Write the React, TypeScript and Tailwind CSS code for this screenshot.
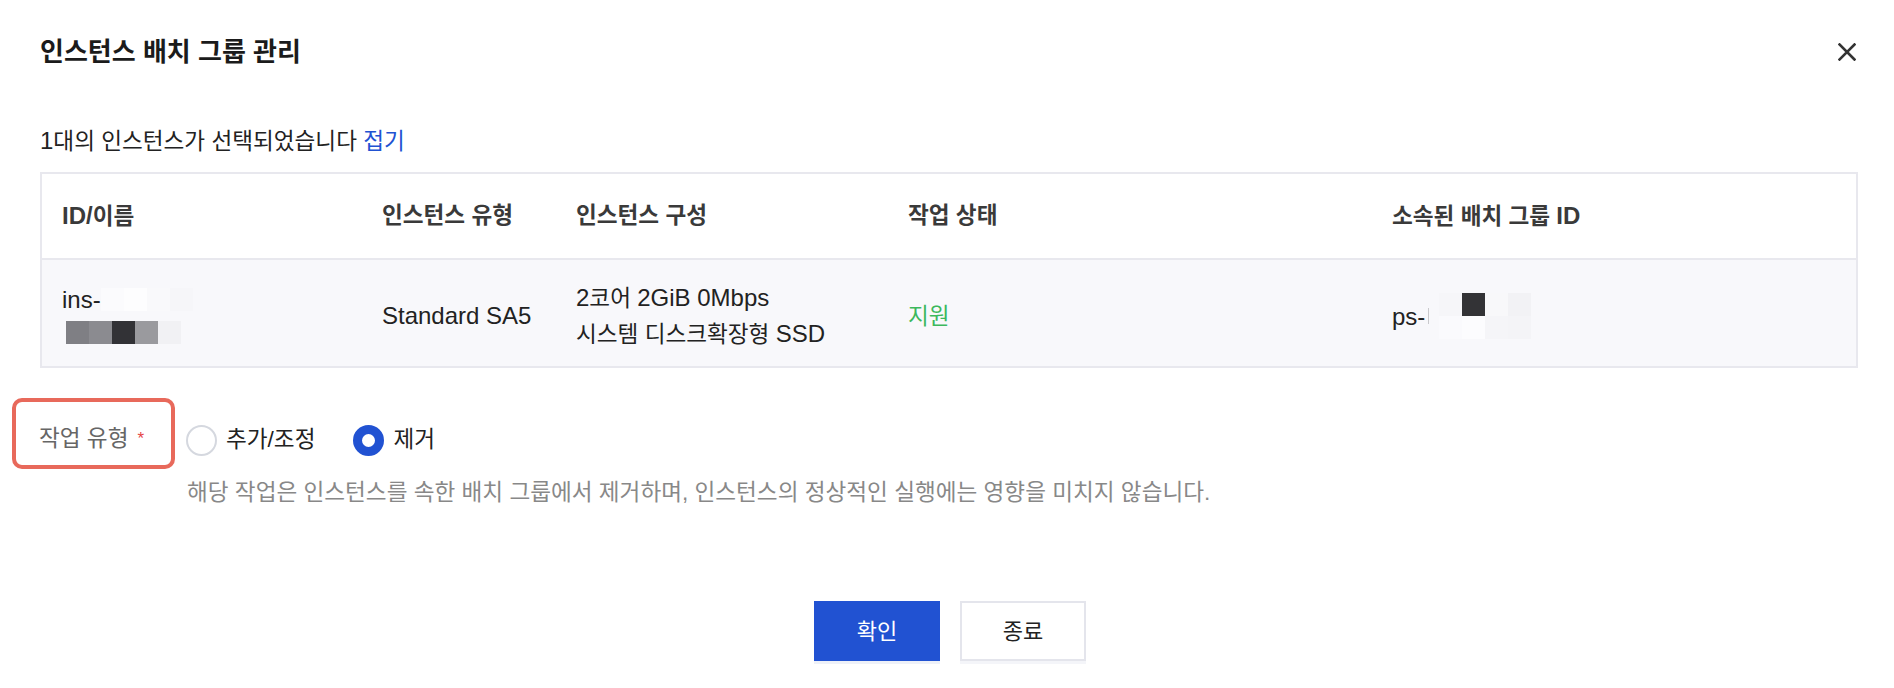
import React from "react";

const FONT = "font-['Liberation_Sans','Noto_Sans_CJK_KR',sans-serif]";

function L({ children }: { children: React.ReactNode }) {
  return <span className="text-[24px]">{children}</span>;
}

function Blocks({ rows, w = 23, h = 23 }: { rows: string[][]; w?: number; h?: number }) {
  return (
    <span className="inline-flex flex-col align-middle">
      {rows.map((r, i) => (
        <span key={i} className="flex">
          {r.map((c, j) => (
            <span key={j} className="block" style={{ background: c, width: w, height: h }} />
          ))}
        </span>
      ))}
    </span>
  );
}

export default function App() {
  return (
    <div className={`${FONT} w-[1894px] h-[688px] bg-white text-[#222] pl-10 pr-9 pt-[36px] relative`}>
      {/* Header */}
      <div className="flex items-center justify-between h-8">
        <h1 className="text-[26px] leading-8 font-bold text-[#1b1b1b]">인스턴스 배치 그룹 관리</h1>
        <button className="w-[20px] h-[20px] flex items-center justify-center mr-[1px]">
          <svg width="18" height="18" viewBox="0 0 18 18">
            <path d="M1.5 1.5 L16.5 16.5 M16.5 1.5 L1.5 16.5" stroke="#333" strokeWidth="2.6" strokeLinecap="square" />
          </svg>
        </button>
      </div>

      {/* Selection line */}
      <div className="mt-[58px] text-[22.6px] leading-[30px] text-[#222]">
        <L>1</L>대의 인스턴스가 선택되었습니다 <span className="text-[#2152d2]">접기</span>
      </div>

      {/* Table */}
      <div className="mt-[15px] border-2 border-[#e8e8ee]">
        <div className="grid grid-cols-[320px_194px_332px_484px_1fr] h-[86px] items-center border-b-2 border-[#e8e8ee] bg-white text-[22.6px] leading-[30px] font-bold text-[#3a3a3a]">
          <div className="pl-5"><L>ID/</L>이름</div>
          <div className="pl-5">인스턴스 유형</div>
          <div className="pl-5">인스턴스 구성</div>
          <div className="pl-5">작업 상태</div>
          <div className="pl-5">소속된 배치 그룹 <L>ID</L></div>
        </div>
        <div className="grid grid-cols-[320px_194px_332px_484px_1fr] h-[106px] pt-[6px] items-center bg-[#f8f8fb] text-[22.6px] leading-[35px] text-[#222]">
          <div className="pl-5">
            <div className="flex items-center h-[35px]">
              <L>ins-</L>
              <Blocks rows={[["#fbfbfd", "#fdfdfe", "#f9f9fb", "#f6f6f9"]]} />
            </div>
            <div className="flex items-center h-[35px] -mt-[2px] pl-[4px]">
              <Blocks rows={[["#7f7f84", "#8b8b90", "#323236", "#9a9a9e", "#f1f1f4"]]} />
            </div>
          </div>
          <div className="pl-5"><L>Standard SA5</L></div>
          <div className="pl-5">
            <div><L>2</L>코어 <L>2GiB 0Mbps</L></div>
            <div>시스템 디스크확장형 <L>SSD</L></div>
          </div>
          <div className="pl-5 text-[#3cb85c]">지원</div>
          <div className="pl-5 flex items-center">
            <L>ps-</L>
            <span className="block w-[1px] h-[16px] bg-[#c9c9cc] ml-[3px] mr-[10px]" />
            <Blocks
              rows={[
                ["#f6f6f9", "#333336", "#f8f8fa", "#f2f2f5"],
                ["#fafafd", "#fcfcfe", "#f5f5f8", "#f4f4f7"],
              ]}
            />
          </div>
        </div>
      </div>

      {/* Operation type */}
      <div className="mt-[30px] flex items-start">
        <div className="-ml-[28px] w-[163px] h-[71px] border-4 border-[#e8695b] rounded-[10px] pl-[23px] pt-[22px] text-[22.6px] leading-[30px] text-[#666] flex">
          작업 유형<span className="text-[#e54545] ml-[9px] text-[17px]">*</span>
        </div>
        <div className="ml-[11px] mt-[26px] flex items-center h-[32px] text-[22.6px] leading-[30px]">
          <span className="w-[31px] h-[31px] rounded-full border-2 border-[#d5d8df] bg-white" />
          <span className="ml-[9px] text-[#222]">추가/조정</span>
          <span className="ml-[38px] w-[31px] h-[31px] rounded-full border-[9px] border-[#2152d2] bg-white" />
          <span className="ml-[9px] text-[#222]">제거</span>
        </div>
      </div>
      <div className="mt-[9px] ml-[147px] text-[22.6px] leading-[30px] text-[#888]">
        해당 작업은 인스턴스를 속한 배치 그룹에서 제거하며, 인스턴스의 정상적인 실행에는 영향을 미치지 않습니다.
      </div>

      {/* Buttons */}
      <div className="mt-[93px] flex justify-center gap-5 pl-[2px]">
        <button className="w-[126px] h-[60px] bg-[#2152d2] text-white text-[22px] shadow-[0_3px_0_#eef1f8]">확인</button>
        <button className="w-[126px] h-[60px] bg-white border-2 border-[#e4e5ec] text-[#222] text-[22px] shadow-[0_3px_0_#f4f5f9]">종료</button>
      </div>
    </div>
  );
}
